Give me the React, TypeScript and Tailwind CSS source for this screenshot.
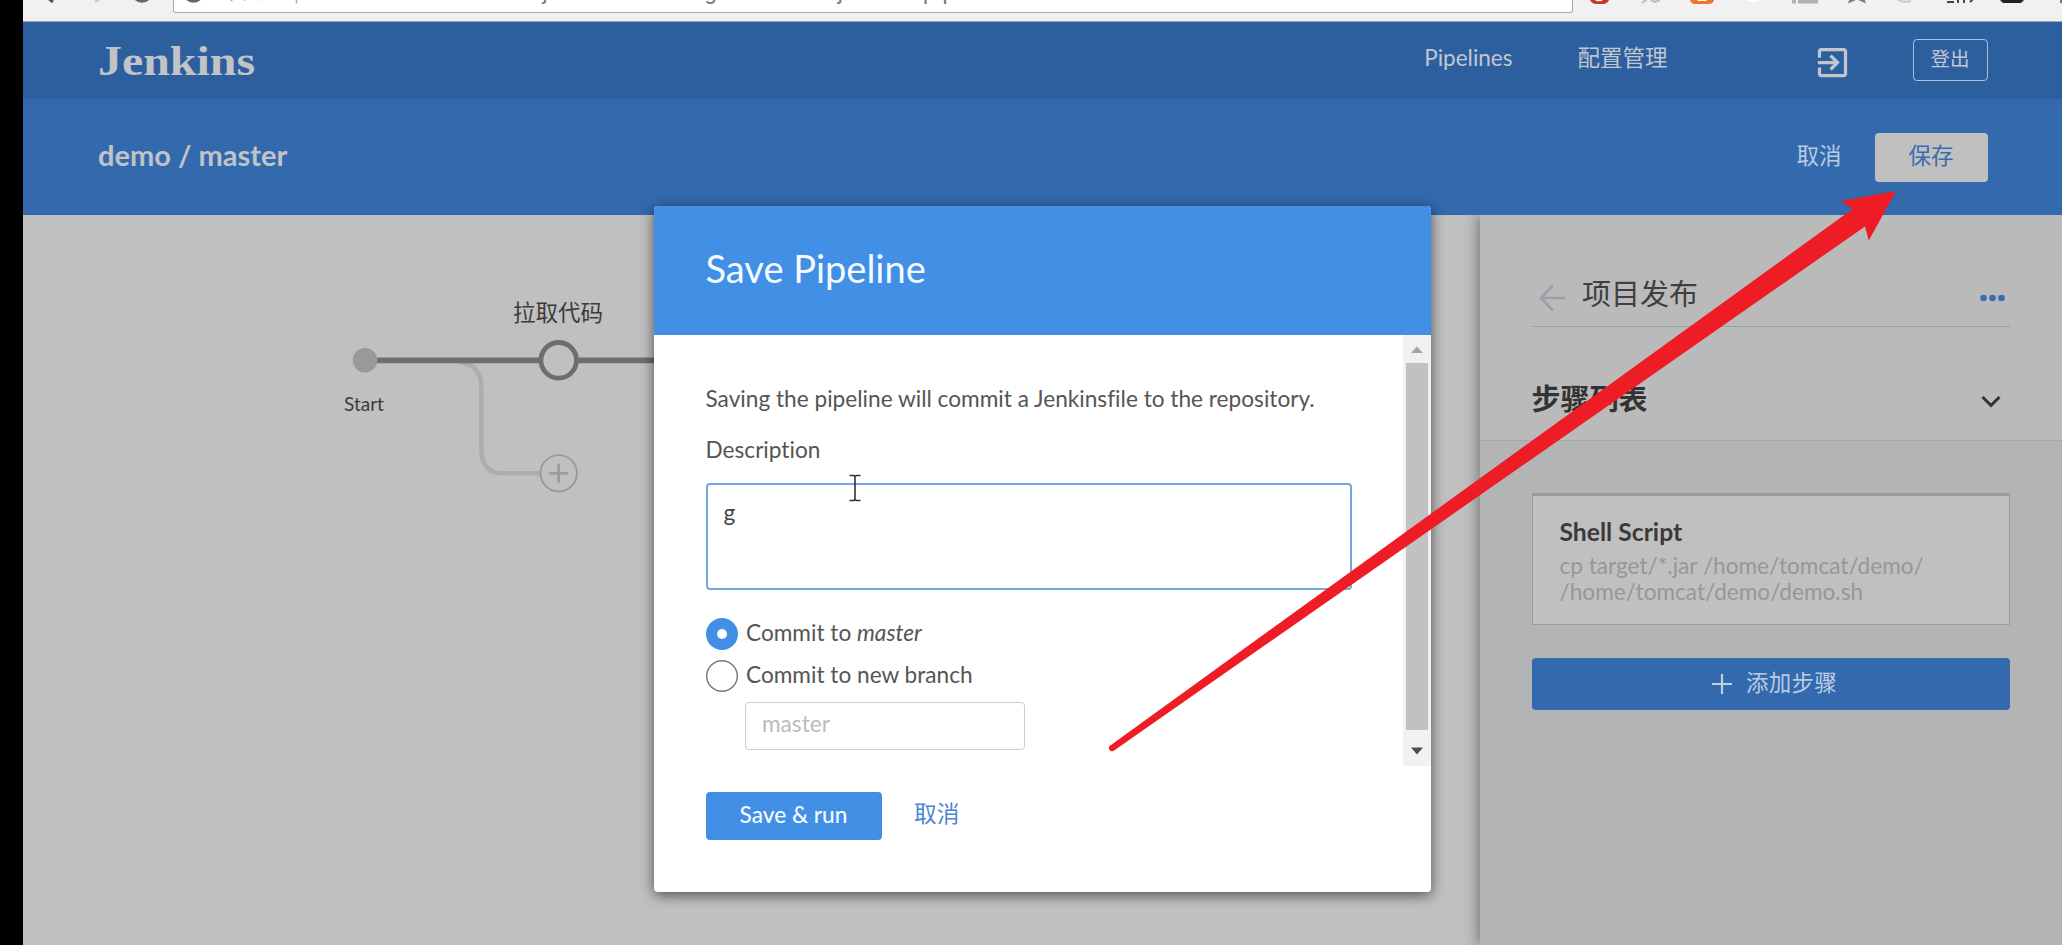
import type { ReactNode } from "react";

const lato = "font-['Lato','Noto_Sans_CJK_SC',sans-serif] [font-variant-ligatures:none]";

function BrowserBar() {
  return (
    <div className="relative flex h-[22px] shrink-0 overflow-hidden border-b-[1.5px] border-[#a3a7ad] bg-[#f2f1f1]">
      <div className="ml-[149.5px] h-[13px] w-[1400px] overflow-hidden rounded-b-[3px] border-x-[1.5px] border-b-[1.5px] border-[#a9a9a9] bg-white">
        <div className="-mt-[21px] flex h-[30px] whitespace-nowrap pl-[48px] font-['Roboto','Noto_Sans_CJK_SC',sans-serif] text-[22px] leading-[26px] text-[#777]">
          <span className="w-[311px] text-[20px]">不安全</span>
          <span className="tracking-[0.9px]">/jenkins/blue/organizations/jenkins/pipeline-editor/demo/master/</span>
        </div>
      </div>
      <svg className="absolute left-0 top-0" width="2039" height="10" viewBox="23 0 2039 10" fill="none">
        <path d="M48 -2l5 4" stroke="#555" strokeWidth="3" />
        <path d="M95 2l6 -4" stroke="#ccc" strokeWidth="2.5" />
        <circle cx="142" cy="-8" r="9" stroke="#666" strokeWidth="3.500" />
        <circle cx="193.500" cy="-8" r="9" stroke="#666" strokeWidth="3.500" />
        <path d="M296.500 0v3.500" stroke="#aaa" strokeWidth="1.500" />
        <path d="M1590 0h19q-2 4-6 4h-7q-4 0-6-4z" fill="#c8352a" />
        <path d="M1595 0h8l-2 1.200h-4z" fill="#fff" />
        <path d="M1642 3l5-4M1651 0l4 2l5-2" stroke="#bbb" strokeWidth="2" />
        <path d="M1690 0h24q-1 4-5 4h-14q-4 0-5-4z" fill="#f07427" />
        <path d="M1697 0h10l-1 1h-8z" fill="#fff" />
        <path d="M1746 0h14q-3 2-7 2t-7-2z" fill="#fff" />
        <path d="M1792 -1h4v4.500h-4zM1798 0h20v3.500h-20z" fill="#b0b0b0" />
        <path d="M1848 3.500l2-6h14l2 6l-9-4z" fill="#7d7d7d" />
        <path d="M1898 0q6 3 13 1" stroke="#ccc" strokeWidth="2" />
        <path d="M1947 2h7M1958 3v-4M1964 3v-4M1970 2l3-3" stroke="#444" strokeWidth="2" />
        <path d="M2000 0h24l-3 3h-18z" fill="#222" />
        <path d="M2060 0h3v3h-3z" fill="#777" />
      </svg>
    </div>
  );
}

function TopNav() {
  return (
    <header className="flex h-[77px] shrink-0 items-start bg-[#2d5f9f] pl-[75px] pr-[74.5px] text-[22.5px] leading-[27px] text-[#c0c7d1]">
      <div className="mt-[19px] origin-left scale-x-[1.14] font-['Liberation_Serif',serif] text-[42px] font-bold leading-[40px] text-[#c1c3c6]">Jenkins</div>
      <nav className="ml-auto mt-[22px] flex gap-[65px]">
        <a>Pipelines</a>
        <a>配置管理</a>
      </nav>
      <svg className="ml-[145px] mt-[21px]" width="39" height="39" viewBox="0 0 24 24" fill="#c2c6cc">
        <path d="M10.090 15.590L11.500 17l5-5-5-5-1.410 1.410L12.670 11H3v2h9.670l-2.580 2.590zM19 3H5c-1.110 0-2 .9-2 2v4h2V5h14v14H5v-4H3v4c0 1.100.890 2 2 2h14c1.100 0 2-.9 2-2V5c0-1.100-.9-2-2-2z" />
      </svg>
      <button className="ml-[61px] mt-[17px] h-[42px] w-[75px] rounded-[4px] border-[1.500px] border-[#a9bfdc] pb-[2px] text-[19.500px] leading-[36px]">登出</button>
    </header>
  );
}

function SubHeader() {
  return (
    <div className="flex h-[116px] shrink-0 items-start bg-[#336aad] pl-[75px] pr-[74.500px] text-[22.500px] leading-[27px]">
      <h1 className="mt-[38px] text-[29px] font-bold leading-[35px] text-[#c0c3c8]">demo / master</h1>
      <button className="ml-auto mt-[43px] text-[#b9cbe2]">取消</button>
      <button className="ml-[33px] mt-[33.500px] h-[49.500px] w-[113px] rounded-[4px] bg-[#c0c0c0] pb-[3px] text-[#3a6db0]">保存</button>
    </div>
  );
}

function PipelineGraph() {
  return (
    <div className="relative h-full w-[1457px] shrink-0">
      <svg width="1457" height="730" viewBox="23 215 1457 730" fill="none">
        <path d="M460 362.500C474 364 481.300 372 481.300 387V448Q481.300 473.300 502 473.300H541" stroke="#adadad" strokeWidth="4.500" />
        <path d="M374 360.300H700" stroke="#6e6e6e" strokeWidth="5.800" />
        <circle cx="365" cy="360.300" r="12.300" fill="#999" />
        <circle cx="558.700" cy="360.300" r="17.800" fill="#c0c0c0" stroke="#6e6e6e" strokeWidth="4.800" />
        <circle cx="558.700" cy="473.300" r="18.200" fill="#c0c0c0" stroke="#999" strokeWidth="1.900" />
        <path d="M549.200 473.300H568.200M558.700 463.800V482.800" stroke="#9c9c9c" strokeWidth="2.800" />
      </svg>
      <span className="absolute left-[490px] top-[84px] whitespace-nowrap text-[22.500px] leading-[27px] text-[#3c3c3c]">拉取代码</span>
      <span className="absolute left-[321px] top-[177px] text-[19px] leading-[23px] text-[#3c3c3c]">Start</span>
    </div>
  );
}

function StepPanel() {
  return (
    <aside className="relative flex h-full flex-1 flex-col bg-[#b2b4b6] shadow-[-3px_0_12px_rgba(0,0,0,0.35)]">
      <div className="flex h-[226px] shrink-0 flex-col border-b-[1.500px] border-[#a4a7ab] bg-[#bababa] pl-[52.500px] pr-[52px]">
        <div className="flex h-[111.500px] items-start border-b-[1.500px] border-[#979fa8] pt-[60.500px]">
          <svg className="mt-[8px] shrink-0" width="34" height="28" viewBox="1532.500 283.500 34 28" fill="none" stroke="#9a9ea8" strokeWidth="2.600">
            <path d="M1552.500 285L1540.500 297.500L1552.500 310M1540.500 297.500H1564.500" />
          </svg>
          <h2 className="ml-[15.500px] text-[29px] leading-[36px] text-[#3f3f3f]">项目发布</h2>
          <svg className="ml-auto mr-[5px] mt-[18px]" width="25" height="8" viewBox="0 0 25 8" fill="#3b6cae">
            <circle cx="3.500" cy="4" r="3.300" />
            <circle cx="12.500" cy="4" r="3.300" />
            <circle cx="21.500" cy="4" r="3.300" />
          </svg>
        </div>
        <div className="flex items-start pt-[54.500px]">
          <h2 className="-ml-px text-[29px] font-bold leading-[36px] text-[#333]">步骤列表</h2>
          <svg className="ml-auto mr-[9px] mt-[13.500px]" width="20" height="14" viewBox="0 0 20 14" fill="none" stroke="#333" strokeWidth="3">
            <path d="M1.500 2L10 10.500L18.500 2" />
          </svg>
        </div>
      </div>
      <div className="ml-[52px] mr-[52px] mt-[52px] flex h-[131.500px] shrink-0 flex-col border-[1.500px] border-t-[3px] border-[#999b9c] bg-[#c0c0c0] pl-[26.500px] pt-[21px]">
        <h3 className="text-[24.700px] font-bold leading-[30px] text-[#3a3a3a]">Shell Script</h3>
        <p className="mt-[5.500px] text-[22.600px] leading-[26.200px] text-[#979797]">
          cp target/*.jar /home/tomcat/demo/
          <br />
          /home/tomcat/demo/demo.sh
        </p>
      </div>
      <button className="ml-[52px] mr-[52px] mt-[33px] flex h-[52px] shrink-0 items-center justify-center gap-[14px] rounded-[4px] bg-[#336aad] pl-[7px] text-[22.500px] leading-[27px] text-[#b9cbe2]">
        <svg width="20" height="20" viewBox="0 0 20 20" stroke="#c0cfe2" strokeWidth="2.200">
          <path d="M0 10H20M10 0V20" />
        </svg>
        <span className="-mt-[3px] tracking-[0.3px]">添加步骤</span>
      </button>
    </aside>
  );
}

function Option({ checked, children }: { checked?: boolean; children: ReactNode }) {
  return (
    <label className="flex h-[32px] items-start">
      <svg width="32" height="32" viewBox="0 0 32 32">
        {checked ? (
          <>
            <circle cx="16" cy="16" r="16" fill="#428fe6" />
            <circle cx="16" cy="16" r="5" fill="#fff" />
          </>
        ) : (
          <circle cx="16" cy="16" r="15.300" fill="#fff" stroke="#777" strokeWidth="1.400" />
        )}
      </svg>
      <span className="ml-[8.500px] mt-[1px]">{children}</span>
    </label>
  );
}

function SaveDialog() {
  return (
    <div className="absolute left-[654px] top-[205.500px] flex h-[686px] w-[776.500px] flex-col overflow-hidden rounded-[4px] bg-white text-[22.650px] leading-[27px] text-[#555] shadow-[0_3px_14px_rgba(0,0,0,0.6)]">
      <div className="h-[129px] shrink-0 bg-[#428fe6] pl-[51.500px] pt-[39.500px] text-[38px] leading-[46px] text-[#f4faff]">Save Pipeline</div>
      <div className="flex h-[431px] shrink-0">
        <div className="flex flex-1 flex-col pl-[51.500px] pt-[50px]">
          <p className="whitespace-nowrap">Saving the pipeline will commit a Jenkinsfile to the repository.</p>
          <p className="mt-[24px]">Description</p>
          <div className="mt-[20.500px] h-[106.500px] w-[646px] shrink-0 rounded-[4px] border-2 border-[#74a6e2] pl-[16px] pt-[14px] text-[#444]">g</div>
          <div className="mt-[28px] flex flex-col gap-[10px]">
            <Option checked>
              Commit to <em>master</em>
            </Option>
            <Option>Commit to new branch</Option>
          </div>
          <div className="ml-[39.500px] mt-[10px] h-[48px] w-[280px] shrink-0 rounded-[4px] border-[1.500px] border-[#ccc] pl-[16px] pt-[7.500px] text-[#bbb]">master</div>
        </div>
        <div className="flex w-[27.500px] shrink-0 flex-col items-center bg-[#f1f1f1]">
          <svg width="28" height="28" viewBox="0 0 28 28" className="shrink-0">
            <path d="M8 18L14 11.500L20 18z" fill="#a3a3a3" />
          </svg>
          <div className="h-[367.500px] w-[21.500px] shrink-0 bg-[#c1c1c1]" />
          <svg width="28" height="34" viewBox="0 0 28 34" className="shrink-0">
            <path d="M8 17.500L14 24.500L20 17.500z" fill="#505050" />
          </svg>
        </div>
      </div>
      <div className="flex items-start pl-[51.500px] pt-[26px]">
        <button className="h-[48px] w-[176px] rounded-[4px] bg-[#428fe6] pb-[3px] font-medium text-[#f4faff]">Save &amp; run</button>
        <button className="ml-[32.500px] mt-[8.500px] text-[#4a85d3]">取消</button>
      </div>
    </div>
  );
}

export default function App() {
  return (
    <div className={`relative flex h-[945px] w-[2062px] overflow-hidden bg-black pl-[23px] ${lato}`}>
      <div className="flex min-w-0 flex-1 flex-col bg-[#c0c0c0]">
        <BrowserBar />
        <TopNav />
        <SubHeader />
        <main className="flex h-[730px] overflow-hidden bg-[#c0c0c0]">
          <PipelineGraph />
          <StepPanel />
        </main>
      </div>
      <SaveDialog />
      <svg className="absolute left-[849px] top-[474px]" width="12" height="28" viewBox="0 0 12 28" fill="none" stroke="#333" strokeWidth="1.600">
        <path d="M.5 1.500H5L6 2.500L7 1.500H11.500M6 2V26M.5 26.500H5L6 25.500L7 26.500H11.500" />
      </svg>
      <svg className="pointer-events-none absolute left-0 top-0" width="2062" height="945" viewBox="0 0 2062 945" fill="#ee1c24">
        <path d="M1110.300 745.400L1852.600 209L1840.700 201L1896 191L1868.800 240.500L1865 226.500L1113.700 750.700A3.150 3.150 0 0 1 1110.300 745.400Z" />
      </svg>
    </div>
  );
}
